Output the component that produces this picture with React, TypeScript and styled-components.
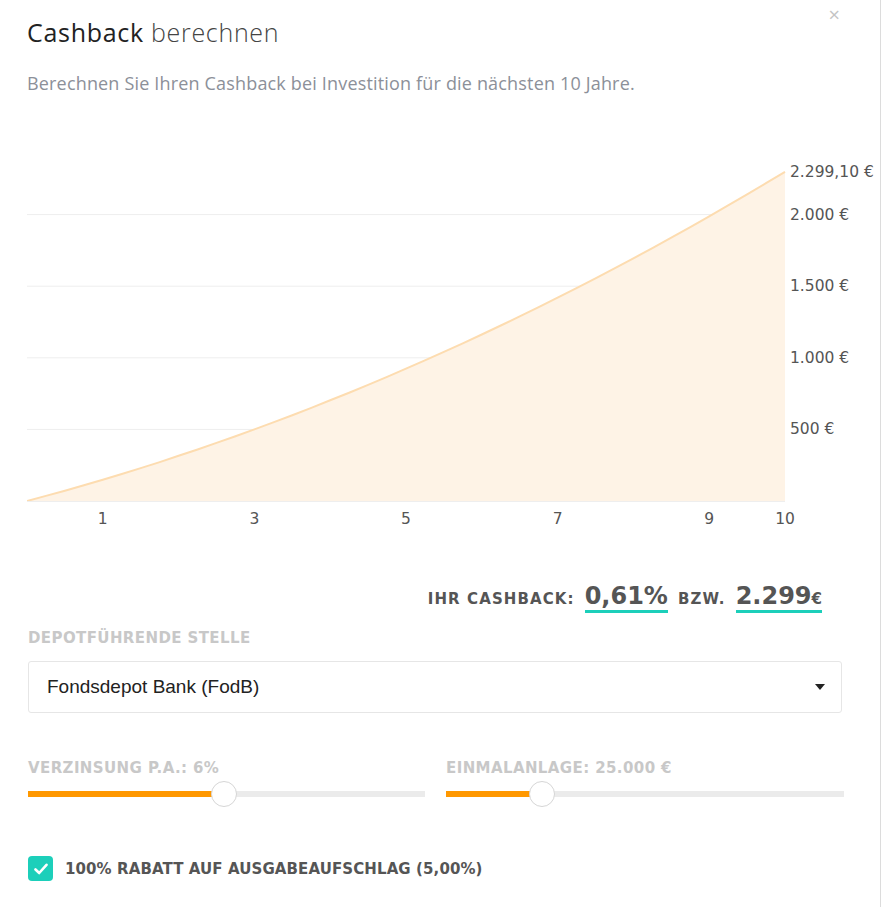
import React from "react";
import styled, { createGlobalStyle } from "styled-components";

const GlobalStyle = createGlobalStyle`
  html, body { margin: 0; padding: 0; background: #fff; }
  body { font-family: "Open Sans", "Liberation Sans", sans-serif; }
`;

const Modal = styled.div`
  position: relative;
  width: 881px;
  min-height: 907px;
  box-sizing: border-box;
  border-right: 1px solid #dcdcdc;
  background: #fff;
  padding: 15px 38px 0 28px;
`;

const Close = styled.button`
  position: absolute;
  top: 1px;
  right: 40px;
  border: 0;
  background: none;
  color: #c4c4c4;
  font-size: 20px;
  font-family: "Open Sans", sans-serif;
  cursor: pointer;
  padding: 0;
`;

const Title = styled.h1`
  margin: 0 0 0 -1px;
  font-size: 25px;
  font-weight: 400;
  color: #222;
  letter-spacing: 0.7px;
  span { font-weight: 300; color: #444; }
`;

const Subtitle = styled.p`
  margin: 22px 0 0 -1px;
  font-size: 18px;
  font-weight: 400;
  color: #8c9099;
  letter-spacing: 0.17px;
`;

const ChartWrap = styled.div`
  margin-top: 55px;
  margin-left: -1px;
  margin-right: -38px;
  svg { display: block; }
`;

const ResultRow = styled.div`
  display: flex;
  justify-content: flex-end;
  align-items: baseline;
  gap: 10px;
  margin-top: 47px;
  padding-right: 20px;
  font-family: "DejaVu Sans", sans-serif;
  color: #555;
`;

const ResultLabel = styled.span`
  font-size: 15px;
  font-weight: 700;
  letter-spacing: 1.1px;
`;

const ResultValue = styled.span`
  font-size: 24px;
  font-weight: 700;
  padding-bottom: 0;
  border-bottom: 3px solid #1ccfba;
  small { font-size: 15px; }
`;

const FieldLabel = styled.div<{ $top?: number }>`
  margin-top: ${(p) => p.$top ?? 0}px;
  font-family: "DejaVu Sans", sans-serif;
  font-size: 15px;
  line-height: 18px;
  font-weight: 700;
  letter-spacing: 0.4px;
  color: #c8c8c8;
`;

const Select = styled.div`
  margin-top: 14px;
  height: 52px;
  box-sizing: border-box;
  border: 1px solid #e6e6e6;
  border-radius: 3px;
  display: flex;
  align-items: center;
  justify-content: space-between;
  padding: 0 16px 0 18px;
  font-family: "Liberation Sans", sans-serif;
  font-size: 19px;
  color: #222;
`;

const Caret = styled.span`
  width: 0;
  height: 0;
  border-left: 5px solid transparent;
  border-right: 5px solid transparent;
  border-top: 6px solid #222;
`;

const SliderGrid = styled.div`
  display: grid;
  grid-template-columns: 397px 398px;
  column-gap: 21px;
  margin-top: 46px;
`;

const Track = styled.div`
  position: relative;
  margin-top: 14px;
  height: 6px;
  background: #ebebeb;
`;

const Fill = styled.div`
  height: 100%;
  background: #ff9800;
`;

const Thumb = styled.div`
  position: absolute;
  top: 50%;
  width: 26px;
  height: 26px;
  margin-left: -13px;
  margin-top: -13px;
  box-sizing: border-box;
  border-radius: 50%;
  background: #fff;
  border: 1px solid #d6d6d6;
`;

const CheckRow = styled.label`
  display: flex;
  align-items: center;
  gap: 12px;
  margin-top: 59px;
  font-family: "DejaVu Sans", sans-serif;
  font-size: 15px;
  font-weight: 700;
  letter-spacing: 0.1px;
  color: #555;
`;

const CheckBox = styled.span`
  width: 25px;
  height: 25px;
  border-radius: 4px;
  background: #1ccfba;
  display: flex;
  align-items: center;
  justify-content: center;
`;

const series = Array.from({ length: 41 }, (_, i) => {
  const t = i / 4;
  return { t, v: 139.6 * t + 9.03 * t * t };
});

const XW = 758;
const Y0 = 351;
const YS = 0.1432;
const xp = (t: number) => (t / 10) * XW;
const yp = (v: number) => Y0 - v * YS;

function Chart() {
  const line = series.map((p, i) => `${i ? "L" : "M"}${xp(p.t).toFixed(1)},${yp(p.v).toFixed(1)}`).join(" ");
  const area = `${line} L${xp(10)},${Y0} L${xp(0)},${Y0} Z`;
  const grid = [500, 1000, 1500, 2000];
  const labelStyle = { fontFamily: "DejaVu Sans, sans-serif", fontSize: 15.5, fill: "#555" };
  return (
    <svg width={856} height={385}>
      {grid.map((g) => (
        <line key={g} x1={0} x2={XW} y1={yp(g)} y2={yp(g)} stroke="#eeeeee" strokeWidth={1} />
      ))}
      <path d={area} fill="#fef3e6" />
      <path d={line} fill="none" stroke="#fddcb0" strokeWidth={2} />
      <line x1={0} x2={XW} y1={Y0 + 0.5} y2={Y0 + 0.5} stroke="#eeeeee" />
      <text x={763} y={yp(2299.1) + 5} style={labelStyle}>2.299,10 €</text>
      {grid.map((g) => (
        <text key={g} x={763} y={yp(g) + 5} style={labelStyle}>
          {g.toLocaleString("de-DE")} €
        </text>
      ))}
      {[1, 3, 5, 7, 9, 10].map((t) => (
        <text key={t} x={xp(t)} y={Y0 + 23} textAnchor="middle" style={labelStyle}>
          {t}
        </text>
      ))}
    </svg>
  );
}

function Slider({ label, pct }: { label: string; pct: number }) {
  return (
    <div>
      <FieldLabel>{label}</FieldLabel>
      <Track>
        <Fill style={{ width: `${pct}%` }} />
        <Thumb style={{ left: `${pct}%` }} />
      </Track>
    </div>
  );
}

export default function App() {
  return (
    <>
      <GlobalStyle />
      <Modal>
        <Close>×</Close>
        <Title>
          Cashback <span>berechnen</span>
        </Title>
        <Subtitle>Berechnen Sie Ihren Cashback bei Investition für die nächsten 10 Jahre.</Subtitle>
        <ChartWrap>
          <Chart />
        </ChartWrap>
        <ResultRow>
          <ResultLabel>IHR CASHBACK:</ResultLabel>
          <ResultValue>0,61%</ResultValue>
          <ResultLabel>BZW.</ResultLabel>
          <ResultValue>
            2.299<small>€</small>
          </ResultValue>
        </ResultRow>
        <FieldLabel $top={16}>DEPOTFÜHRENDE STELLE</FieldLabel>
        <Select>
          Fondsdepot Bank (FodB)
          <Caret />
        </Select>
        <SliderGrid>
          <Slider label="VERZINSUNG P.A.: 6%" pct={49.4} />
          <Slider label="EINMALANLAGE: 25.000 €" pct={24.1} />
        </SliderGrid>
        <CheckRow>
          <CheckBox>
            <svg width="14" height="12" viewBox="0 0 14 12">
              <path d="M1.5 6.5 L5.2 10 L12.5 1.8" fill="none" stroke="#fff" strokeWidth="2.6" strokeLinecap="round" strokeLinejoin="round" />
            </svg>
          </CheckBox>
          100% RABATT AUF AUSGABEAUFSCHLAG (5,00%)
        </CheckRow>
      </Modal>
    </>
  );
}
